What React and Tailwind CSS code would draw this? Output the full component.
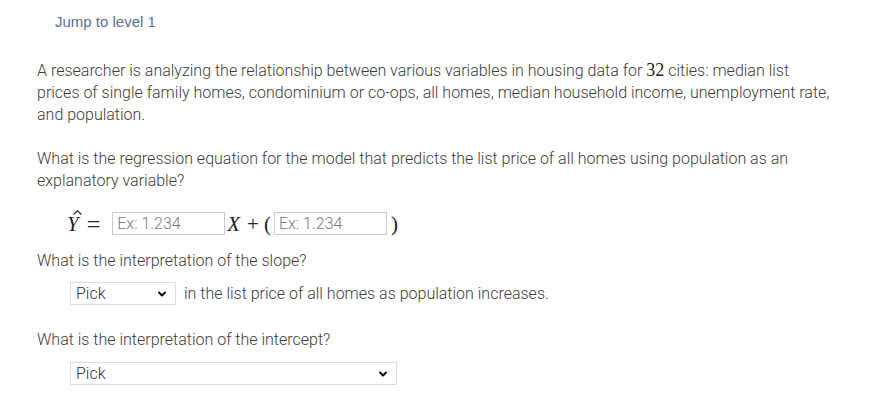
import { ChevronDown } from "lucide-react";

const serif = { fontFamily: '"Liberation Serif", "DejaVu Serif", serif' };

function AnswerBox({ className }) {
  return (
    <input
      type="text"
      placeholder="Ex: 1.234"
      className={
        "h-[23px] border border-[#c8ccd0] bg-white px-[4px] text-[16px] font-light text-[#333] placeholder:text-[#7a7a7a] outline-none " +
        className
      }
    />
  );
}

function PickSelect({ width }) {
  return (
    <div className={"relative h-[23px] border border-[#dcdde0] bg-white " + width}>
      <select className="h-full w-full appearance-none bg-transparent pl-[5px] text-[16px] font-light text-[#333] outline-none">
        <option>Pick</option>
      </select>
      <ChevronDown
        size={12}
        strokeWidth={4}
        className="pointer-events-none absolute right-[7px] top-[5px] text-[#111]"
      />
    </div>
  );
}

export default function App() {
  return (
    <div
      className="min-h-[415px] w-[876px] bg-white text-[16px] font-light leading-[22px] text-[#3c3c3c]"
      style={{ fontFamily: "Roboto, 'Liberation Sans', sans-serif" }}
    >
      <div
        className="pl-[55px] pt-[13px] text-[15px] leading-[18px] text-[#5d6f8f]"
        style={{ fontFamily: "'Liberation Sans', Arial, sans-serif" }}
      >
        Jump to level 1
      </div>

      <div className="px-[37px]">
        <p className="mt-[28px] w-[800px]">
          A researcher is analyzing the relationship between various variables in housing data for{" "}
          <span className="text-[18px] font-normal text-[#222]" style={serif}>32</span>{" "}
          cities: median list
          <br />
          prices of single family homes, condominium or co-ops, all homes, median household income, unemployment rate, and population.
        </p>

        <p className="mt-[22px] w-[770px]">
          What is the regression equation for the model that predicts the list price of all homes using population as an explanatory variable?
        </p>

        <div className="mt-[20px] flex h-[23px] items-center pl-[30px]">
          <span className="relative text-[21px] italic text-[#222]" style={serif}>
            Y
            <svg
              width="9"
              height="5"
              viewBox="0 0 9 5"
              className="absolute left-[6px] top-[-3px]"
            >
              <path d="M0.5 4.5 L4.5 0.8 L8.5 4.5" fill="none" stroke="#222" strokeWidth="1.1" />
            </svg>
          </span>
          <span className="ml-[8px] mr-[12px] text-[24px] leading-[22px] text-[#222]" style={serif}>=</span>
          <AnswerBox className="w-[113px]" />
          <span className="ml-[2px] text-[21px] italic text-[#222]" style={serif}>X</span>
          <span className="ml-[7px] text-[21px] text-[#222]" style={serif}>+</span>
          <span className="ml-[5px] text-[21px] text-[#222]" style={serif}>(</span>
          <AnswerBox className="ml-[3px] w-[113px]" />
          <span className="ml-[4px] text-[21px] text-[#222]" style={serif}>)</span>
        </div>

        <p className="mt-[15px]">What is the interpretation of the slope?</p>

        <div className="mt-[10px] flex items-center gap-[8px] pl-[33px]">
          <PickSelect width="w-[106px]" />
          <span>in the list price of all homes as population increases.</span>
        </div>

        <p className="mt-[24px]">What is the interpretation of the intercept?</p>

        <div className="mt-[11px] pl-[33px]">
          <PickSelect width="w-[327px]" />
        </div>
      </div>
    </div>
  );
}
